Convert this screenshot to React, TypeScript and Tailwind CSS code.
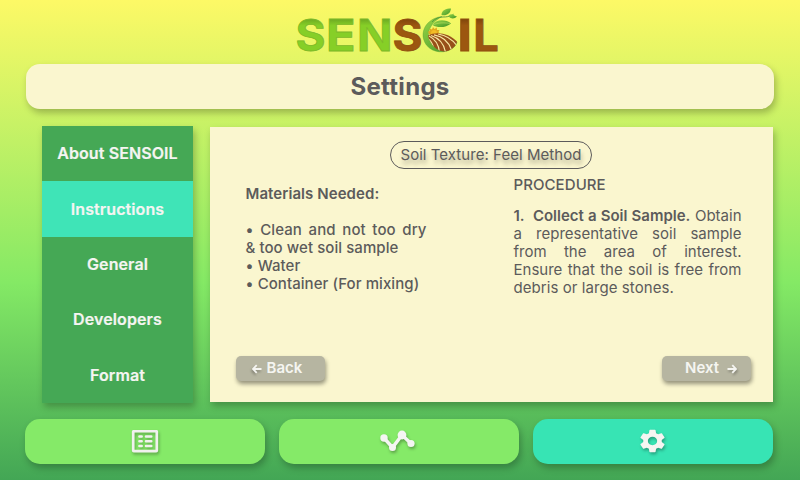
import type { ReactNode } from "react";
import { MdSettings } from "react-icons/md";

const shadow = "shadow-[2px_4px_7px_rgba(0,0,0,0.25)]";
const iconShadow = "drop-shadow-[1px_2px_1.5px_rgba(0,0,0,0.3)]";

function Logo() {
  return (
    <svg width="220" height="60" viewBox="290 0 220 60" className="block">
      <defs>
        <linearGradient id="leaf" x1="0" y1="0" x2="1" y2="1">
          <stop offset="0" stopColor="#9ad646" />
          <stop offset="1" stopColor="#3d9427" />
        </linearGradient>
        <linearGradient id="green" gradientUnits="userSpaceOnUse" x1="0" y1="19" x2="0" y2="52">
          <stop offset="0" stopColor="#6da922" />
          <stop offset=".2" stopColor="#86cf27" />
          <stop offset="1" stopColor="#86cf27" />
        </linearGradient>
        <linearGradient id="brown" gradientUnits="userSpaceOnUse" x1="0" y1="19" x2="0" y2="52">
          <stop offset="0" stopColor="#7f450c" />
          <stop offset=".2" stopColor="#9c5710" />
          <stop offset="1" stopColor="#9c5710" />
        </linearGradient>
        <clipPath id="field">
          <path d="M428 35.500C436 31 449 33 457 41.500C456 47 450 51.500 444 51.500C436 51 430 44 428 35.500Z" />
        </clipPath>
      </defs>
      <g fontFamily="Inter, sans-serif" fontWeight="700" fontSize="43.5" strokeWidth=".8">
        <g fill="url(#green)" stroke="#7db928">
          <text x="295.6" y="51.2" textLength="30" lengthAdjust="spacingAndGlyphs">S</text>
          <text x="325.9" y="51.2" textLength="29.5" lengthAdjust="spacingAndGlyphs">E</text>
          <text x="357" y="51.2" textLength="35.5" lengthAdjust="spacingAndGlyphs">N</text>
        </g>
        <g fill="url(#brown)" stroke="#91500f">
          <text x="392.6" y="51.2" textLength="30" lengthAdjust="spacingAndGlyphs">S</text>
          <text x="457.3" y="51.2" textLength="15" lengthAdjust="spacingAndGlyphs">I</text>
          <text x="473.3" y="51.2" textLength="25.5" lengthAdjust="spacingAndGlyphs">L</text>
        </g>
      </g>
      <path d="M442 16.500C429 18 421 28 423.500 39C426 49 437 54 447 51C452 49.500 456 46 457 42C452 49 442 51.500 435 47C425 40 426 25 442 16.500Z" fill="url(#leaf)" stroke="#5ba436" strokeWidth=".4" />
      <path d="M432 22C435 18.500 439 17 443 17C447 17 449 16.500 451 15.500" stroke="#54993a" strokeWidth=".9" fill="none" />
      <path d="M432.500 25C437 18.500 446 19.500 451 23.500C446 28 437 28 432.500 25Z" fill="url(#leaf)" />
      <path d="M433 25C438 22.500 444 22.500 450 23.500" stroke="#cbe86a" strokeWidth=".5" fill="none" />
      <path d="M441.500 15C441.500 10 446 8.500 451 8.500C450.500 14 446 16 441.500 15Z" fill="url(#leaf)" />
      <path d="M448.500 16C450 13.500 452 15 453.500 13.500C453.500 16 455 15.500 457 16.500C454.500 19 451 19.500 448.500 16Z" fill="url(#leaf)" />
      <path d="M429 34L428 31.500L430 31L429.500 28.500L432 29.500L433 27L434.500 29L436.800 27.500L437 30L439.500 30L438.500 32L440 34L434 36Z" fill="#e3a91c" />
      <circle cx="434" cy="32.800" r="2.900" fill="#f3bd25" />
      <g clipPath="url(#field)">
        <rect x="425" y="30" width="34" height="24" fill="#98501a" />
        <g fill="none" stroke="#f6e7a2" strokeWidth="1.200">
          <path d="M428 38.500C432 42 434 46 434 52" />
          <path d="M429 36C435 39 439 45 439.500 53" />
          <path d="M431 35.500C439 38 444 44 445.500 52" />
          <path d="M434 34.800C443 36.500 449 42 451.500 50" />
          <path d="M438 34C447 35.500 453 40 457 46" />
        </g>
      </g>
    </svg>
  );
}

function ListIcon() {
  return (
    <svg width="28" height="24" viewBox="0 0 28 24" className={iconShadow}>
      <rect x="2.200" y="1.200" width="23.600" height="20" rx=".6" fill="none" stroke="#f1f1ee" strokeWidth="2.700" />
      <g stroke="#f1f1ee" strokeWidth="2.500" strokeLinecap="round">
        <path d="M8.400 6.500h2.300M8.400 11.200h2.300M8.400 15.900h2.300M15 6.500h5.300M15 11.200h5.300M15 15.900h5.300" />
      </g>
    </svg>
  );
}

function ChartIcon() {
  return (
    <svg width="36" height="22" viewBox="0 0 36 22" className={`-translate-x-[1.5px] -translate-y-px ${iconShadow}`}>
      <path d="M4.500 8L13 17.500L22.500 5L31.500 13.500" fill="none" stroke="#f5f5f2" strokeWidth="3.400" />
      <g fill="#f5f5f2">
        <circle cx="4.500" cy="8" r="3.700" />
        <circle cx="13" cy="17.500" r="3.500" />
        <circle cx="22.500" cy="5" r="4.400" />
        <circle cx="31.500" cy="13.500" r="3.600" />
      </g>
    </svg>
  );
}

function Arrow({ back = false }: { back?: boolean }) {
  return (
    <svg
      width="10"
      height="10"
      viewBox="0 0 10 10"
      className={`drop-shadow-[1px_2px_1px_rgba(0,0,0,0.25)] ${back ? "-scale-x-100" : ""}`}
      fill="none"
      stroke="#f5f5f1"
      strokeWidth="1.800"
    >
      <path d="M.5 5h8.300M5.300 1.200L9 5L5.300 8.800" />
    </svg>
  );
}

function NavButton({ active = false, children }: { active?: boolean; children: ReactNode }) {
  return (
    <button
      className={`flex h-[45px] w-[240px] items-center justify-center rounded-[15px] ${shadow} ${
        active ? "bg-[#37e4b4]" : "bg-[#85ea68]"
      }`}
    >
      {children}
    </button>
  );
}

const menu = ["About SENSOIL", "Instructions", "General", "Developers", "Format"];

export default function App() {
  return (
    <div className="h-[480px] w-[800px] overflow-hidden bg-[linear-gradient(180deg,#fdf966_0%,#84e965_59%,#43a655_100%)] font-[Inter,sans-serif] text-[#5c5b5b]">
      <header className="flex h-16 justify-center">
        <Logo />
      </header>
      <div className={`ml-[26px] flex h-[45px] w-[748px] items-center justify-center rounded-[14px] bg-[#faf6cf] ${shadow}`}>
        <h1 className="text-2xl font-bold tracking-[0.3px]">Settings</h1>
      </div>
      <main className="mt-[17px] flex h-[277px] gap-[17px] pl-[42px]">
        <nav className={`grid w-[151px] grid-rows-5 ${shadow} bg-[#45a855]`}>
          {menu.map((item) => (
            <button
              key={item}
              className={`pb-px text-base font-semibold tracking-[0.1px] text-[#f5f5f2] [-webkit-text-stroke:0.2px_#f5f5f2] ${item === "Instructions" ? "bg-[#3fe4b7]" : ""}`}
            >
              {item}
            </button>
          ))}
        </nav>
        <section className={`mt-[0.5px] flex h-[275.5px] w-[563px] flex-col bg-[#faf6cf] ${shadow}`}>
          <div className="flex h-[229.5px]">
            <div className="ml-[35.5px] w-[181px] shrink-0 pt-[58.5px] text-[15px] leading-[18px] tracking-[0.07px]">
              <h2 className="font-semibold">Materials Needed:</h2>
              <div className="pt-[18px] font-medium">
                <p className="text-justify [text-align-last:justify]">• Clean and not too dry</p>
                <p>&amp; too wet soil sample</p>
                <p>• Water</p>
                <p>• Container (For mixing)</p>
              </div>
            </div>
            <div className="-ml-[36.5px] flex w-[351px] shrink-0 flex-col pt-[14px]">
              <h2 className="flex h-7 w-[202px] items-center justify-center whitespace-nowrap rounded-full border border-[#5c5b5b] pt-px text-[15px] tracking-[0.05px] [text-shadow:1px_4px_4px_rgba(0,0,0,0.3)]">
                Soil Texture: Feel Method
              </h2>
              <div className="ml-[123.5px] w-[228px] pt-[7.5px] text-[15px] leading-[18px]">
                <h3 className="font-medium tracking-[0.07px]">PROCEDURE</h3>
                <div className="pt-[13px] [text-align-last:justify]">
                  <p className="whitespace-nowrap">
                    <strong className="font-semibold">1.&nbsp; Collect a Soil Sample.</strong> Obtain
                  </p>
                  <p>a representative soil sample</p>
                  <p>from the area of interest.</p>
                  <p>Ensure that the soil is free from</p>
                  <p className="tracking-[0.07px] [text-align-last:left]">debris or large stones.</p>
                </div>
              </div>
            </div>
          </div>
          <div className="flex justify-between pl-[25.5px] pr-[22px] text-[15px] font-semibold text-[#f5f5f1] [text-shadow:1px_2px_2px_rgba(0,0,0,0.25)]">
            <button className="flex h-[25px] w-[89px] items-center gap-[5px] rounded-[5px] bg-[#b6b5a1] pl-4 shadow-[1px_3px_4px_rgba(0,0,0,0.4)]">
              <Arrow back /> Back
            </button>
            <button className="flex h-[25px] w-[89px] items-center gap-2 rounded-[5px] bg-[#b6b5a1] pl-[23px] shadow-[1px_3px_4px_rgba(0,0,0,0.4)]">
              Next <Arrow />
            </button>
          </div>
        </section>
      </main>
      <footer className="mt-4 flex gap-[14px] pl-[25px]">
        <NavButton><ListIcon /></NavButton>
        <NavButton><ChartIcon /></NavButton>
        <NavButton active>
          <MdSettings className={`h-[28px] w-[31px] -translate-x-px -translate-y-px text-[#f5f5f2] ${iconShadow}`} preserveAspectRatio="none" />
        </NavButton>
      </footer>
    </div>
  );
}
